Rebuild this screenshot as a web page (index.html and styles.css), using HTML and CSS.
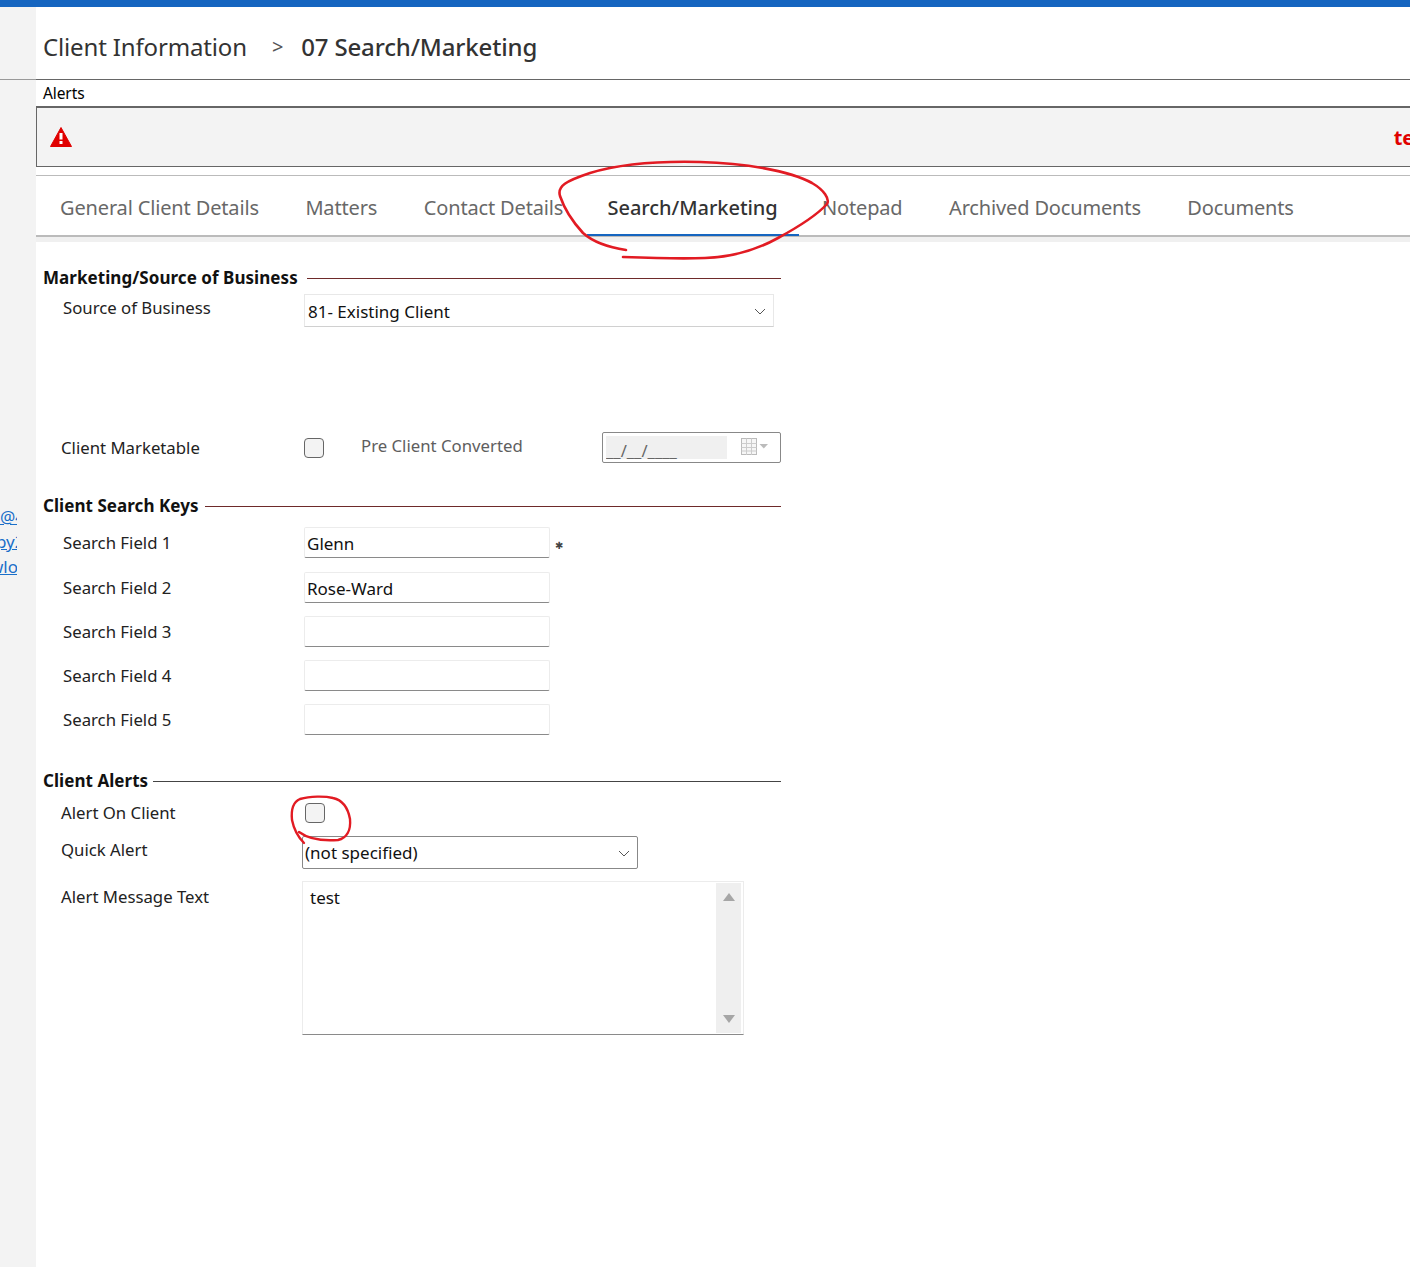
FILE: index.html
```html
<!DOCTYPE html>
<html lang="en">
<head>
<meta charset="utf-8">
<title>Client Information</title>
<link rel="stylesheet" href="styles.css">
</head>
<body>
<div class="topbar"></div>
<div class="shell">
  <aside class="sidebar">
    <div class="side-rule"></div>
    <a class="side-link first" href="#"><span>@4</span></a>
    <a class="side-link" href="#"><span class="cut-p">py2</span></a>
    <a class="side-link" href="#"><span class="cut-w">wlo</span></a>
  </aside>
  <main class="main">
    <header class="crumbs">
      <span class="crumb-parent">Client Information</span>
      <span class="crumb-sep">&gt;</span>
      <span class="crumb-current">07 Search/Marketing</span>
    </header>
    <section class="alerts">
      <div class="alerts-title">Alerts</div>
      <div class="alerts-body">
        <svg class="alert-icon" width="22" height="20" viewBox="0 0 22 20"><path d="M11 0.5 L21.5 19.5 H0.5 Z" fill="#e00000" stroke="#e00000" stroke-linejoin="round"/><rect x="9.5" y="6" width="3" height="6.5" fill="#fff"/><rect x="9.5" y="14" width="3" height="3" fill="#fff"/></svg>
        <span class="alert-text">test</span>
      </div>
    </section>
    <nav class="tabs">
      <a class="tab">General Client Details</a>
      <a class="tab">Matters</a>
      <a class="tab">Contact Details</a>
      <a class="tab tab-active">Search/Marketing</a>
      <a class="tab">Notepad</a>
      <a class="tab">Archived Documents</a>
      <a class="tab">Documents</a>
    </nav>
    <div class="band"></div>
    <form class="form">
      <div class="section-head s1"><h2>Marketing/Source of Business</h2><span class="rule maroon"></span></div>
      <div class="row source-row">
        <label class="label">Source of Business</label>
        <div class="select select-light">81- Existing Client<svg class="chev" width="12" height="7" viewBox="0 0 12 7"><path d="M1 1 L6 6 L11 1" fill="none" stroke="#555" stroke-width="1"/></svg></div>
      </div>
      <div class="row marketable-row">
        <label class="label label-alt">Client Marketable</label>
        <span class="check"></span>
        <label class="muted">Pre Client Converted</label>
        <div class="date">
          <span class="date-value">__/__/____</span>
          <svg class="cal" width="28" height="18" viewBox="0 0 28 18"><rect x="0.5" y="0.5" width="15" height="16" fill="#f6f6f6" stroke="#bbb"/><path d="M0.5 5.5H15.5M0.5 9.5H15.5M0.5 13H15.5M5.5 .5V17M10.5 .5V17" stroke="#ccc" fill="none"/><path d="M18.5 6 H27 L22.8 10.5 Z" fill="#bbb"/></svg>
        </div>
      </div>

      <div class="section-head s2"><h2>Client Search Keys</h2><span class="rule maroon"></span></div>
      <div class="row key-row k1"><label class="label">Search Field 1</label><div class="input">Glenn</div><span class="req">&#10033;</span></div>
      <div class="row key-row k2"><label class="label">Search Field 2</label><div class="input">Rose-Ward</div></div>
      <div class="row key-row"><label class="label">Search Field 3</label><div class="input"></div></div>
      <div class="row key-row"><label class="label">Search Field 4</label><div class="input"></div></div>
      <div class="row key-row"><label class="label">Search Field 5</label><div class="input"></div></div>

      <div class="section-head s3"><h2>Client Alerts</h2><span class="rule dark"></span></div>
      <div class="row alert-on"><label class="label label-alt">Alert On Client</label><span class="check check-b"></span></div>
      <div class="row quick"><label class="label label-alt">Quick Alert</label>
        <div class="select select-dark">(not specified)<svg class="chev" width="12" height="7" viewBox="0 0 12 7"><path d="M1 1 L6 6 L11 1" fill="none" stroke="#555" stroke-width="1"/></svg></div>
      </div>
      <div class="row message"><label class="label label-alt">Alert Message Text</label>
        <div class="textarea">
          <div class="ta-text">test</div>
          <div class="scroll">
            <svg width="12" height="8" viewBox="0 0 12 8"><path d="M6 0 L12 8 H0 Z" fill="#a6a6a6"/></svg>
            <svg width="12" height="8" viewBox="0 0 12 8"><path d="M0 0 H12 L6 8 Z" fill="#a6a6a6"/></svg>
          </div>
        </div>
      </div>
    </form>
  </main>
</div>
<svg class="ink" width="1410" height="1267" viewBox="0 0 1410 1267" aria-hidden="true">
  <path d="M626 250 C606 247 592 241 583 233 C572 221 564 208 560 196 C557 186 566 181 590 173 C620 164 660 161 700 162 C745 163 790 171 812 183 C824 190 830 199 827 204 C818 214 800 226 778 238 C760 248 735 257 705 258 C680 259 650 258 623 257" fill="none" stroke="#e21b23" stroke-width="2.6" stroke-linecap="round" stroke-linejoin="round"/>
  <path d="M304 843 C299 838 294 830 292 820 C291 810 293 802 300 799 C310 796 325 796 333 798 C342 800 348 808 350 819 C351 830 347 838 338 840 C325 841 310 840 299 832" fill="none" stroke="#e21b23" stroke-width="2.4" stroke-linecap="round" stroke-linejoin="round"/>
</svg>
</body>
</html>
```
FILE: styles.css
```css
* { box-sizing: border-box; }
html, body { margin: 0; padding: 0; }
body {
  font-family: "Noto Sans", "Open Sans", sans-serif;
  background: #fff;
  color: #111;
  width: 1410px;
  height: 1267px;
  overflow: hidden;
  position: relative;
}
.topbar { height: 7px; background: #1565c0; }
.shell { display: flex; height: 1260px; }
.sidebar { width: 36px; flex: none; background: #f3f3f3; }
.side-rule { height: 1px; background: #999; margin-top: 72px; }
.side-link {
  display: flex; width: 17px; height: 25px; overflow: hidden;
  color: #1a6fc9; text-decoration: underline; font-size: 17px; line-height: 25px;
  white-space: nowrap;
}
.side-link.first { margin-top: 424px; }
.side-link .cut-p { margin-left: -4px; }
.side-link .cut-w { margin-left: -10px; }
.main { flex: 1; min-width: 0; overflow: hidden; }

.crumbs {
  height: 72px; display: flex; align-items: center; padding: 14px 0 7px 7px;
  font-size: 24px; letter-spacing: -0.15px; color: #333;
}
.crumb-sep { margin: 0 18px 0 25px; font-size: 20px; color: #555; }
.crumb-current { color: #333; font-weight: 500; }

.alerts { border-top: 1px solid #666; }
.alerts-title { height: 26px; padding-left: 7px; font-size: 15.5px; letter-spacing: -0.1px; line-height: 26px; color: #000; }
.alerts-body {
  height: 61px; background: #f3f3f3; border: 1px solid #666; border-top-width: 2px; border-right: 0;
  display: flex; align-items: center; justify-content: space-between; padding: 0 0 0 13px; overflow: hidden;
}
.alert-icon { flex: none; }
.alert-text { color: #e00000; font-weight: 700; font-size: 20px; margin-right: -23px; }

.tabs {
  margin-top: 8px; height: 62px; border-top: 1px solid #bbb; border-bottom: 2px solid #bbb;
  display: flex; align-items: stretch; padding-left: 0.75px;
}
.tab {
  display: flex; align-items: center; padding: 5px 23.25px 0; color: #686868; font-size: 20px; white-space: nowrap;
  margin-bottom: -1px; border-bottom: 2px solid transparent; letter-spacing: -0.15px;
}
.tab-active { color: #333; border-bottom-color: #1565c0; font-weight: 500; padding-left: 21px; padding-right: 21px; letter-spacing: -0.05px; }
.band { height: 5px; background: #f0f0f0; }

.form { width: 738px; margin-left: 7px; font-size: 16.75px; }
.section-head { display: flex; align-items: center; gap: 7px; height: 20px; }
.section-head h2 { margin: 0 0 2px; font-size: 17px; font-weight: 700; color: #111; letter-spacing: 0.05px; white-space: nowrap; }
.rule { flex: 1; height: 1px; }
.maroon { background: #6e2a2a; }
.dark { background: #444; }
.s1 { margin-top: 26px; gap: 9px; }
.s2 { margin-top: 33px; gap: 6px; }
.s3 { margin-top: 36px; gap: 5px; }

.row { display: flex; align-items: flex-start; }
.label { width: 261px; flex: none; padding-left: 20px; color: #222; white-space: nowrap; line-height: 24px; }
.label-alt { padding-left: 18px; }

.select { position: relative; display: flex; align-items: center; font-size: 17px; color: #111; }
.chev { position: absolute; right: 7px; top: 13px; }
.source-row { margin-top: 6px; height: 33px; }
.source-row .label { line-height: 16px; padding-top: 6px; }
.select-light { width: 470px; height: 33px; border: 1px solid #e8e8e8; border-bottom-color: #d0d0d0; padding: 1px 0 0 3px; }
.marketable-row { margin-top: 105px; height: 31px; }
.marketable-row .label { padding-top: 4px; }
.check { display: block; width: 20px; height: 20px; border: 1px solid #666; border-radius: 4px; background: #f3f3f3; flex: none; }
.marketable-row .check { margin-top: 6px; }
.muted { margin-left: 37px; width: 241px; flex: none; color: #5e5e5e; line-height: 28px; }
.date { width: 179px; height: 31px; border: 1px solid #888; border-radius: 2px; display: flex; padding: 3px; align-items: stretch; position: relative; }
.date-value { width: 121px; background: #f0f0f0; color: #666; font-size: 16.5px; line-height: 30px; overflow: hidden; white-space: nowrap; }
.cal { position: absolute; left: 138px; top: 5px; }

.key-row { height: 31px; margin-top: 13px; }
.key-row .label { padding-top: 2px; line-height: 28px; }
.k1 { margin-top: 11px; }
.k2 { margin-top: 14px; }
.input {
  width: 246px; height: 31px; border: 1px solid #ececec; border-bottom-color: #8a8a8a; border-radius: 2px;
  padding-left: 2px; font-size: 17px; line-height: 32px; color: #111; background: #fff;
}
.req { margin-left: 5px; font-family: "DejaVu Sans", sans-serif; font-size: 10px; line-height: 38px; color: #444; }

.alert-on { margin-top: 12px; height: 20px; }
.alert-on .label { line-height: 20px; }
.alert-on .check { margin-left: 1px; }
.quick { margin-top: 13px; margin-left: 0; }
.quick .label { width: 259px; line-height: 28px; }
.select-dark { width: 336px; height: 33px; border: 1px solid #888; border-radius: 2px; padding-left: 2px; }
.message { margin-top: 12px; }
.message .label { width: 259px; line-height: 32px; }
.textarea {
  width: 442px; height: 154px; border: 1px solid #ececec; border-bottom-color: #8a8a8a;
  display: flex; justify-content: space-between; padding: 1px 2px 1px 1px; background: #fff;
}
.ta-text { padding: 3px 0 0 6px; font-size: 17px; line-height: 24px; color: #111; }
.scroll { width: 25px; background: #efefef; display: flex; flex-direction: column; justify-content: space-between; align-items: center; padding: 10px 0 10px; }

.ink { position: absolute; left: 0; top: 0; pointer-events: none; }
```
